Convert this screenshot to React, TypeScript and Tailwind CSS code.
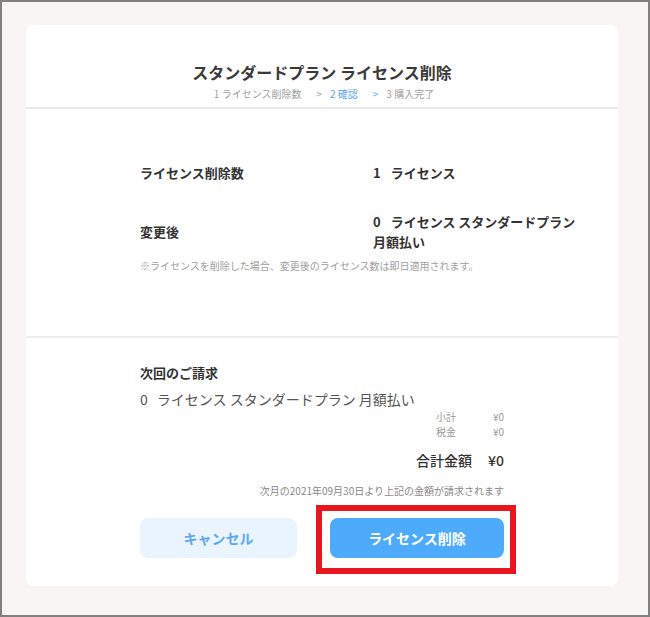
import React from 'react';

const font = { fontFamily: '"Noto Sans CJK JP", "Noto Sans", sans-serif' };

export default function App() {
  return (
    <div
      className="w-[650px] h-[617px] border-2 border-[#808080] bg-[#f7f6f4] overflow-hidden"
      style={font}
    >
      <div className="ml-[24px] mt-[23px] w-[592px] h-[561px] bg-white rounded-[8px] flex flex-col">
        {/* header */}
        <div className="pt-[36px] pb-[6px] flex flex-col items-center">
          <h1 className="text-[16px] leading-[22px] font-bold text-[#3a3a3a]">
            スタンダードプラン ライセンス削除
          </h1>
          <div className="mt-[4px] ml-[4px] text-[10px] leading-[14px] text-[#a0a0a0] flex items-center">
            <span>1 ライセンス削除数</span>
            <span className="ml-[15px]">&gt;</span>
            <span className="ml-[8px] text-[#5aa6f3]">2 確認</span>
            <span className="ml-[15px] text-[#5aa6f3]">&gt;</span>
            <span className="ml-[8px]">3 購入完了</span>
          </div>
        </div>
        <div className="h-[2px] bg-[#e8e8e8]" />

        {/* section 1 */}
        <div className="px-[114px] pt-[54px] pb-[63px]">
          <div className="w-[466px] flex items-center text-[13px] leading-[20px] font-bold text-[#333]">
            <div className="w-[233px]">ライセンス削除数</div>
            <div className="w-[233px] flex">
              <span className="mr-[10px]">1</span>
              <span>ライセンス</span>
            </div>
          </div>
          <div className="mt-[29px] w-[466px] flex items-center text-[13px] leading-[20px] font-bold text-[#333]">
            <div className="w-[233px]">変更後</div>
            <div className="w-[233px] flex flex-col whitespace-nowrap">
              <div className="flex">
                <span className="mr-[10px]">0</span>
                <span>ライセンス スタンダードプラン</span>
              </div>
              <div>月額払い</div>
            </div>
          </div>
          <p className="mt-[7px] text-[10px] leading-[14px] text-[#a0a0a0] whitespace-nowrap">
            ※ライセンスを削除した場合、変更後のライセンス数は即日適用されます。
          </p>
        </div>
        <div className="h-[2px] bg-[#ececec]" />

        {/* section 2 */}
        <div className="px-[114px] pt-[25px]">
          <div className="text-[13px] leading-[20px] font-bold text-[#333]">次回のご請求</div>
          <div className="mt-[6px] flex text-[14px] leading-[20px] text-[#555]">
            <span className="mr-[9px]">0</span>
            <span>ライセンス スタンダードプラン 月額払い</span>
          </div>
          <div className="flex flex-col items-end text-[10px] leading-[15px] text-[#999]">
            <div className="flex">
              <span>小計</span>
              <span className="w-[48px] text-right">¥0</span>
            </div>
            <div className="flex">
              <span>税金</span>
              <span className="w-[48px] text-right">¥0</span>
            </div>
          </div>
          <div className="mt-[11px] flex justify-end text-[14px] leading-[20px] font-medium text-[#333]">
            <span>合計金額</span>
            <span className="ml-[16px]">¥0</span>
          </div>
          <div className="mt-[14px] text-right text-[10px] leading-[14px] text-[#888]">
            次月の2021年09月30日より上記の金額が請求されます
          </div>
          <div className="mt-[20px] flex justify-between">
            <button className="w-[157px] h-[40px] rounded-[8px] bg-[#eaf4fe] text-[#5aa8f4] text-[14px] font-bold">
              キャンセル
            </button>
            <div className="relative">
              <button className="w-[174px] h-[40px] rounded-[8px] bg-[#4eabfc] text-white text-[14px] font-bold">
                ライセンス削除
              </button>
              <div className="absolute left-[-14px] top-[-13px] right-[-12px] bottom-[-16px] border-[6px] border-[#e8161f] pointer-events-none" />
            </div>
          </div>
        </div>
      </div>
    </div>
  );
}
